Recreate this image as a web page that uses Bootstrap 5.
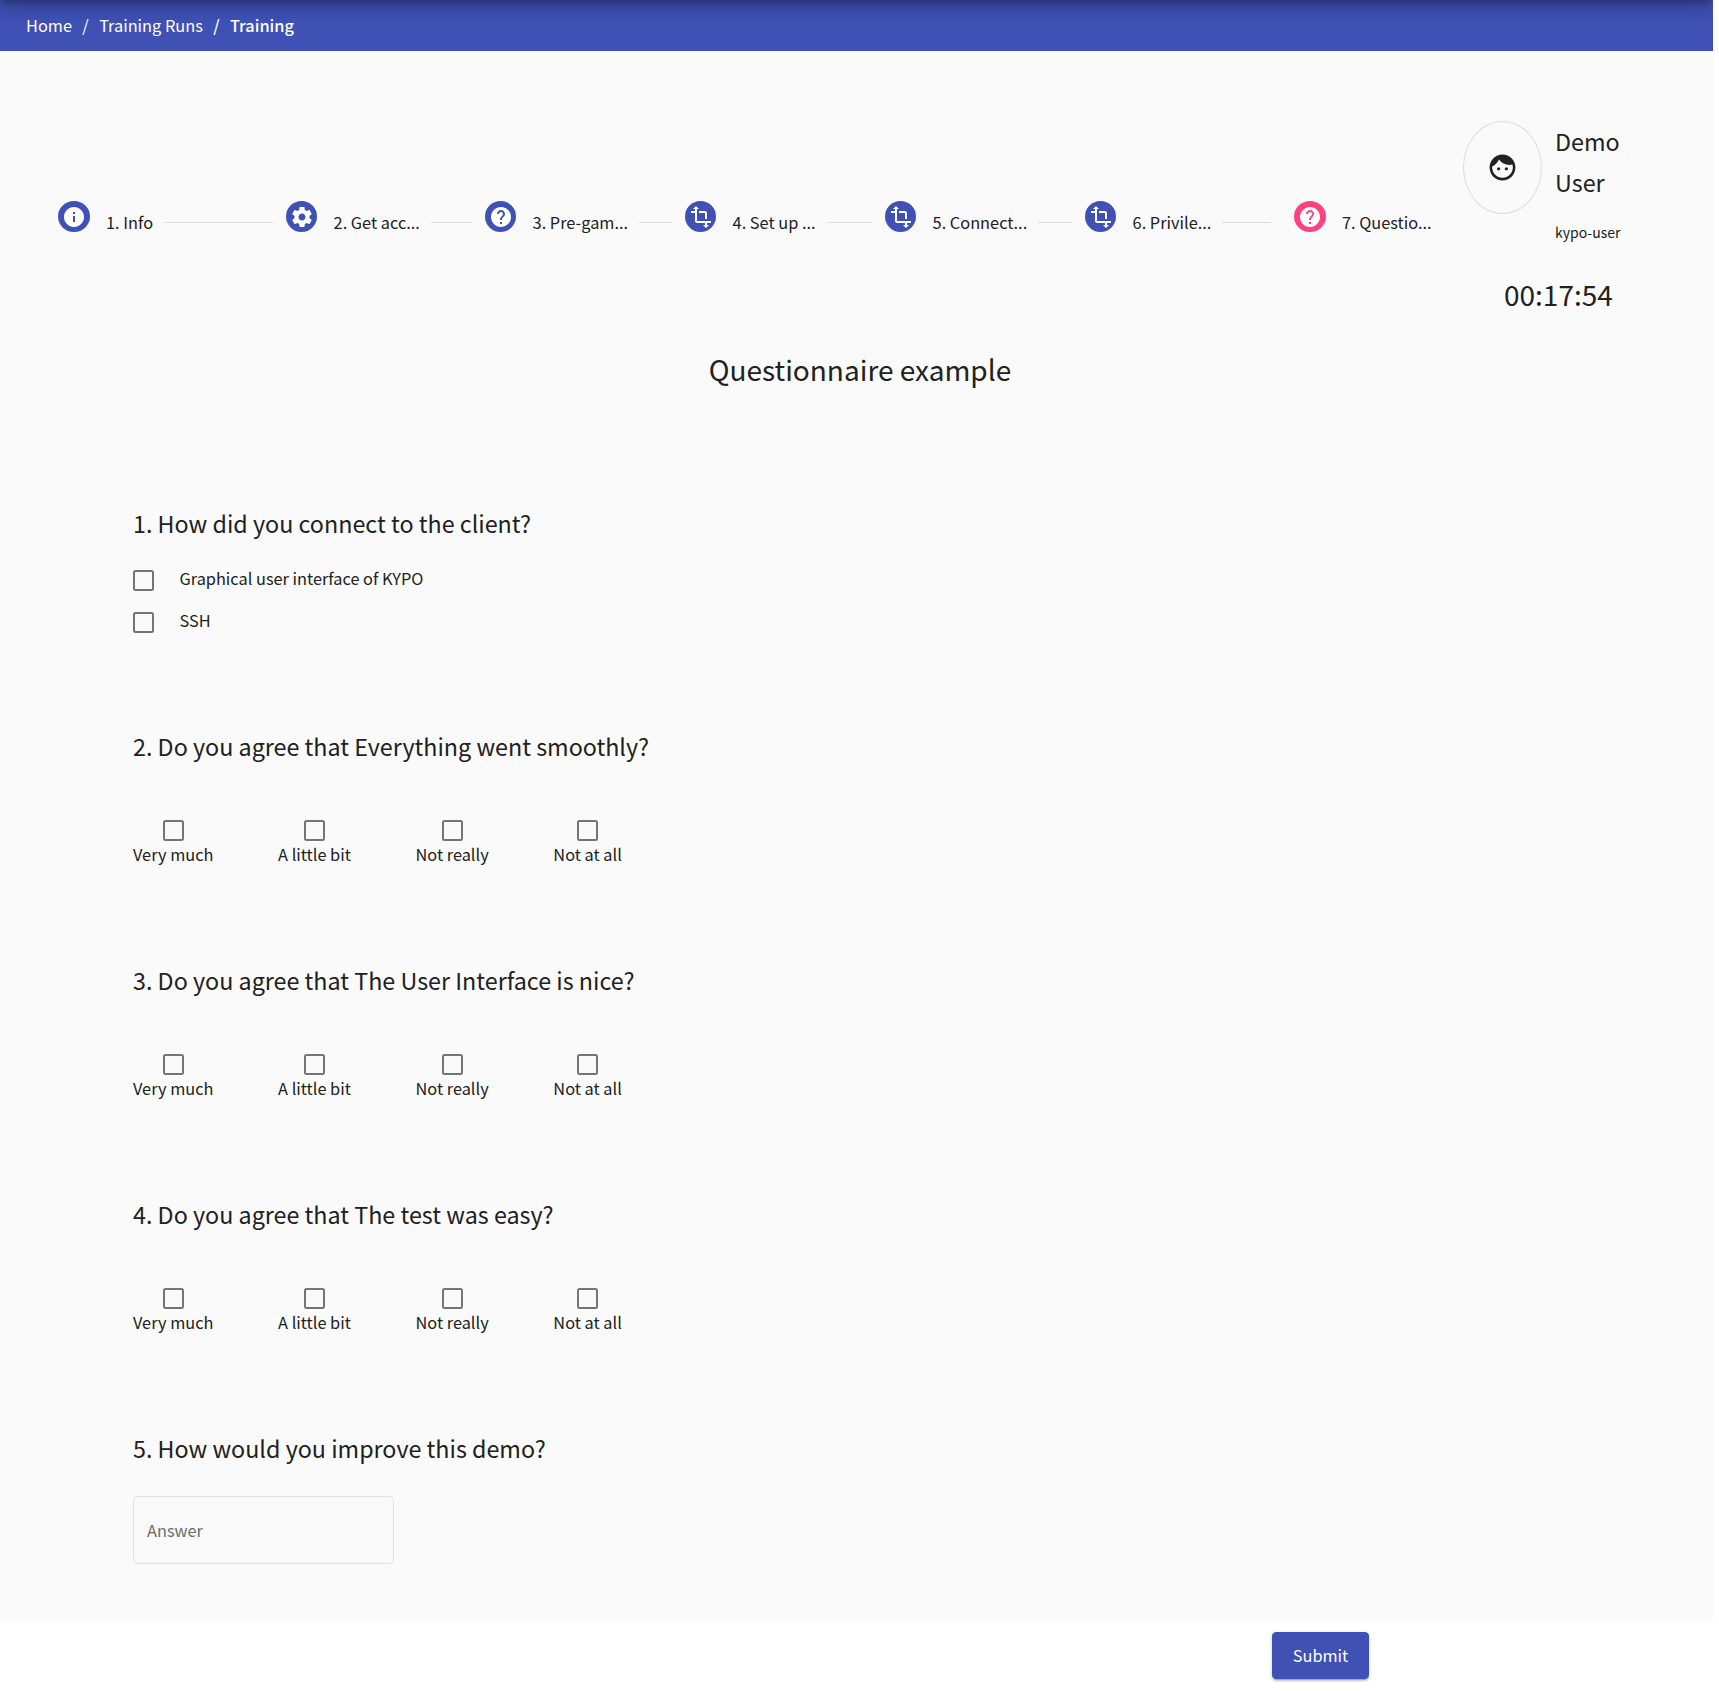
<!DOCTYPE html>
<html lang="en">
<head>
<meta charset="utf-8">
<meta name="viewport" content="width=device-width, initial-scale=1">
<title>Training</title>
<link href="https://cdn.jsdelivr.net/npm/bootstrap@5.3.0/dist/css/bootstrap.min.css" rel="stylesheet">
<style>
  body { font-family: "Noto Sans CJK SC", "Noto Sans CJK JP", sans-serif; font-size: 16.33px; line-height: 26px; color: #212121; background: #fff; overflow: hidden; }
  .page { width: 1713px; height: 1625px; background: #fafafa; }
  .topbar { height: 51px; background: #3f51b5; padding: 0 0 2px 26px; overflow: hidden; }
  .topbar::before { content: ""; position: absolute; left: 0; right: 0; top: -20px; height: 20px; box-shadow: 0 5px 6px -3px rgba(0,0,0,.2), 0 9px 14px 1px rgba(0,0,0,.14), 0 3px 19px 2px rgba(0,0,0,.12); }
  .crumbs { --bs-breadcrumb-divider-color: #fff; --bs-breadcrumb-item-active-color: #fff; --bs-breadcrumb-item-padding-x: 10.4px; }
  .crumbs a { color: #fff; text-decoration: none; }
  .overview { height: 278px; }
  .stepper { padding: 145px 0 0 58px; height: 196px; }
  .step-item { width: 200px; height: 51px; }
  .step-first { width: 228px; }
  .step-second { width: 199px; }
  .step-wide { width: 209px; }
  .step-current { width: 150px; }
  .step-dot { width: 31px; height: 31px; margin: 0 16.6px 10px 0; background: #3f51b5; }
  .step-first .step-dot, .step-current .step-dot { width: 32px; margin-right: 16px; }
  .step-current .step-dot { background: #ff4081; }
  .step-dot svg { width: 24px; height: 24px; fill: #fff; }
  .step-rule { height: 1px; background: #dcdcdc; margin: 2px 13px 0 11px; }
  .step-wide .step-rule { margin-right: 23px; }
  .profile { width: 250px; padding-top: 69px; }
  .avatar { width: 79px; height: 93px; margin-top: 1px; border: 1px solid #dcdcdc; border-radius: 50%; }
  .avatar svg { width: 31px; height: 31px; fill: #212121; }
  .who { width: 80px; margin-left: 13px; padding-top: 1px; }
  .who-name { font-size: 23.33px; line-height: 41px; }
  .who-login { font-size: 14px; line-height: 22px; margin-top: 18px; }
  .clock { font-size: 28px; line-height: 40px; margin: 31px 0 0 41px; }
  .heading { font-size: 28px; line-height: 40px; height: 42px; padding: 20px 0 0 7px; }
  .questions { padding: 132px 0 0 133px; }
  .q-multi { height: 223px; }
  .q-scale { height: 234px; }
  .q-title { font-size: 23.3px; line-height: 41px; margin: 0; font-weight: 400; }
  .form-check-input.tick[type="checkbox"] { width: 21px; height: 21px; margin: 0; border: 2px solid #757575; border-radius: 2.5px; background: #fafafa; display: block; }
  .opt-list { padding-top: 21px; }
  .opt-row { height: 42px; gap: 25.5px; }
  .opt-row .form-check-input.tick[type="checkbox"] { margin-top: 5px; }
  .scale-row { padding-top: 53px; gap: 64.7px; }
  .answer { width: 261px; height: 68px; margin-top: 27px; padding: 0 13px 1px; border: 1px solid #e0e0e0; border-radius: 5px; background: #fafafa; font-size: 16.33px; }
  .answer::placeholder { color: #6c6c6c; opacity: 1; }
  .actions { height: 70px; margin-top: -4px; padding: 11px 0 0 1272px; background: #fff; border-top-left-radius: 4px; }
  .submit { --bs-btn-bg: #3f51b5; --bs-btn-border-color: #3f51b5; display: block; width: 97px; height: 47px; padding-bottom: 7px; font-size: 16.33px; border-radius: 4px; box-shadow: 0 3px 1px -2px rgba(0,0,0,.2), 0 2px 2px 0 rgba(0,0,0,.14), 0 1px 5px 0 rgba(0,0,0,.12); }
</style>
<script src="https://cdn.jsdelivr.net/npm/bootstrap@5.3.0/dist/js/bootstrap.bundle.min.js"></script>
</head>
<body>
<svg class="d-none" xmlns="http://www.w3.org/2000/svg">
  <symbol id="i-info" viewBox="0 0 24 24"><path d="M12 2C6.48 2 2 6.48 2 12s4.48 10 10 10 10-4.48 10-10S17.52 2 12 2zm1 15h-2v-6h2v6zm0-8h-2V7h2v2z"/></symbol>
  <symbol id="i-gear" viewBox="0 0 24 24"><path d="M19.43 12.98c.04-.32.07-.64.07-.98s-.03-.66-.07-.98l2.11-1.65c.19-.15.24-.42.12-.64l-2-3.46c-.12-.22-.39-.3-.61-.22l-2.49 1c-.52-.4-1.08-.73-1.69-.98l-.38-2.65C14.46 2.18 14.25 2 14 2h-4c-.25 0-.46.18-.49.42l-.38 2.65c-.61.25-1.17.59-1.69.98l-2.49-1c-.23-.09-.49 0-.61.22l-2 3.46c-.13.22-.07.49.12.64l2.11 1.65c-.04.32-.07.65-.07.98s.03.66.07.98l-2.11 1.65c-.19.15-.24.42-.12.64l2 3.46c.12.22.39.3.61.22l2.49-1c.52.4 1.08.73 1.69.98l.38 2.65c.03.24.24.42.49.42h4c.25 0 .46-.18.49-.42l.38-2.65c.61-.25 1.17-.59 1.69-.98l2.49 1c.23.09.49 0 .61-.22l2-3.46c.12-.22.07-.49-.12-.64l-2.11-1.65zM12 15.5c-1.93 0-3.5-1.57-3.5-3.5s1.57-3.5 3.5-3.5 3.5 1.57 3.5 3.5-1.57 3.5-3.5 3.5z"/></symbol>
  <symbol id="i-help" viewBox="0 0 24 24"><path d="M12 2C6.48 2 2 6.48 2 12s4.48 10 10 10 10-4.48 10-10S17.52 2 12 2zm1 17h-2v-2h2v2zm2.07-7.75l-.9.92C13.45 12.9 13 13.5 13 15h-2v-.5c0-1.1.45-2.1 1.17-2.83l1.24-1.26c.37-.36.59-.86.59-1.41 0-1.1-.9-2-2-2s-2 .9-2 2H8c0-2.21 1.79-4 4-4s4 1.79 4 4c0 .88-.36 1.68-.93 2.25z"/></symbol>
  <symbol id="i-transform" viewBox="0 0 24 24"><path d="M22 18v-2H8V4h2L7 1 4 4h2v2H2v2h4v8c0 1.1.9 2 2 2h8v2h-2l3 3 3-3h-2v-2h4zM10 8h6v6h2V8c0-1.1-.9-2-2-2h-6v2z"/></symbol>
  <symbol id="i-face" viewBox="0 0 24 24"><path d="M9 11.75c-.69 0-1.25.56-1.25 1.25s.56 1.25 1.25 1.25 1.25-.56 1.25-1.25-.56-1.25-1.25-1.25zm6 0c-.69 0-1.25.56-1.25 1.25s.56 1.25 1.25 1.25 1.25-.56 1.25-1.25-.56-1.25-1.25-1.25zM12 2C6.48 2 2 6.48 2 12s4.48 10 10 10 10-4.48 10-10S17.52 2 12 2zm0 18c-4.41 0-8-3.59-8-8 0-.29.02-.58.05-.86 2.36-1.05 4.23-2.98 5.21-5.37C11.07 8.33 14.05 10 17.42 10c.78 0 1.53-.09 2.25-.26.21.71.33 1.47.33 2.26 0 4.41-3.59 8-8 8z"/></symbol>
</svg>

<div class="page">
  <nav class="topbar position-relative d-flex align-items-center" aria-label="breadcrumb">
    <ol class="breadcrumb crumbs mb-0">
      <li class="breadcrumb-item"><a href="#">Home</a></li>
      <li class="breadcrumb-item"><a href="#">Training Runs</a></li>
      <li class="breadcrumb-item active fw-medium" aria-current="page">Training</li>
    </ol>
  </nav>

  <section class="overview d-flex justify-content-between">
    <div class="stepper d-flex text-nowrap">
      <div class="step-item step-first d-flex align-items-center"><span class="step-dot rounded-circle d-flex align-items-center justify-content-center flex-shrink-0"><svg><use href="#i-info"/></svg></span><span>1. Info</span><span class="step-rule flex-grow-1"></span></div>
      <div class="step-item step-second d-flex align-items-center"><span class="step-dot rounded-circle d-flex align-items-center justify-content-center flex-shrink-0"><svg><use href="#i-gear"/></svg></span><span>2. Get acc...</span><span class="step-rule flex-grow-1"></span></div>
      <div class="step-item d-flex align-items-center"><span class="step-dot rounded-circle d-flex align-items-center justify-content-center flex-shrink-0"><svg><use href="#i-help"/></svg></span><span>3. Pre-gam...</span><span class="step-rule flex-grow-1"></span></div>
      <div class="step-item d-flex align-items-center"><span class="step-dot rounded-circle d-flex align-items-center justify-content-center flex-shrink-0"><svg><use href="#i-transform"/></svg></span><span>4. Set up ...</span><span class="step-rule flex-grow-1"></span></div>
      <div class="step-item d-flex align-items-center"><span class="step-dot rounded-circle d-flex align-items-center justify-content-center flex-shrink-0"><svg><use href="#i-transform"/></svg></span><span>5. Connect...</span><span class="step-rule flex-grow-1"></span></div>
      <div class="step-item step-wide d-flex align-items-center"><span class="step-dot rounded-circle d-flex align-items-center justify-content-center flex-shrink-0"><svg><use href="#i-transform"/></svg></span><span>6. Privile...</span><span class="step-rule flex-grow-1"></span></div>
      <div class="step-item step-current d-flex align-items-center"><span class="step-dot rounded-circle d-flex align-items-center justify-content-center flex-shrink-0"><svg><use href="#i-help"/></svg></span><span>7. Questio...</span></div>
    </div>
    <div class="profile flex-shrink-0">
      <div class="d-flex">
        <div class="avatar d-flex align-items-center justify-content-center"><svg><use href="#i-face"/></svg></div>
        <div class="who">
          <div class="who-name">Demo User</div>
          <div class="who-login text-nowrap">kypo-user</div>
        </div>
      </div>
      <div class="clock">00:17:54</div>
    </div>
  </section>

  <h1 class="heading text-center fw-normal mb-0">Questionnaire example</h1>

  <form class="questions">
    <div class="q-multi">
      <h2 class="q-title">1. How did you connect to the client?</h2>
      <div class="opt-list">
        <label class="opt-row d-flex align-items-start"><input class="form-check-input tick" type="checkbox"><span>Graphical user interface of KYPO</span></label>
        <label class="opt-row d-flex align-items-start"><input class="form-check-input tick" type="checkbox"><span>SSH</span></label>
      </div>
    </div>
    <div class="q-scale">
      <h2 class="q-title">2. Do you agree that Everything went smoothly?</h2>
      <div class="scale-row d-flex">
        <label class="d-flex flex-column align-items-center"><input class="form-check-input tick" type="checkbox"><span>Very much</span></label>
        <label class="d-flex flex-column align-items-center"><input class="form-check-input tick" type="checkbox"><span>A little bit</span></label>
        <label class="d-flex flex-column align-items-center"><input class="form-check-input tick" type="checkbox"><span>Not really</span></label>
        <label class="d-flex flex-column align-items-center"><input class="form-check-input tick" type="checkbox"><span>Not at all</span></label>
      </div>
    </div>
    <div class="q-scale">
      <h2 class="q-title">3. Do you agree that The User Interface is nice?</h2>
      <div class="scale-row d-flex">
        <label class="d-flex flex-column align-items-center"><input class="form-check-input tick" type="checkbox"><span>Very much</span></label>
        <label class="d-flex flex-column align-items-center"><input class="form-check-input tick" type="checkbox"><span>A little bit</span></label>
        <label class="d-flex flex-column align-items-center"><input class="form-check-input tick" type="checkbox"><span>Not really</span></label>
        <label class="d-flex flex-column align-items-center"><input class="form-check-input tick" type="checkbox"><span>Not at all</span></label>
      </div>
    </div>
    <div class="q-scale">
      <h2 class="q-title">4. Do you agree that The test was easy?</h2>
      <div class="scale-row d-flex">
        <label class="d-flex flex-column align-items-center"><input class="form-check-input tick" type="checkbox"><span>Very much</span></label>
        <label class="d-flex flex-column align-items-center"><input class="form-check-input tick" type="checkbox"><span>A little bit</span></label>
        <label class="d-flex flex-column align-items-center"><input class="form-check-input tick" type="checkbox"><span>Not really</span></label>
        <label class="d-flex flex-column align-items-center"><input class="form-check-input tick" type="checkbox"><span>Not at all</span></label>
      </div>
    </div>
    <div>
      <h2 class="q-title">5. How would you improve this demo?</h2>
      <input class="form-control answer" type="text" placeholder="Answer" aria-label="Answer">
    </div>
  </form>
</div>
<div class="actions position-relative"><button class="btn btn-primary submit" type="button">Submit</button></div>
</body>
</html>
